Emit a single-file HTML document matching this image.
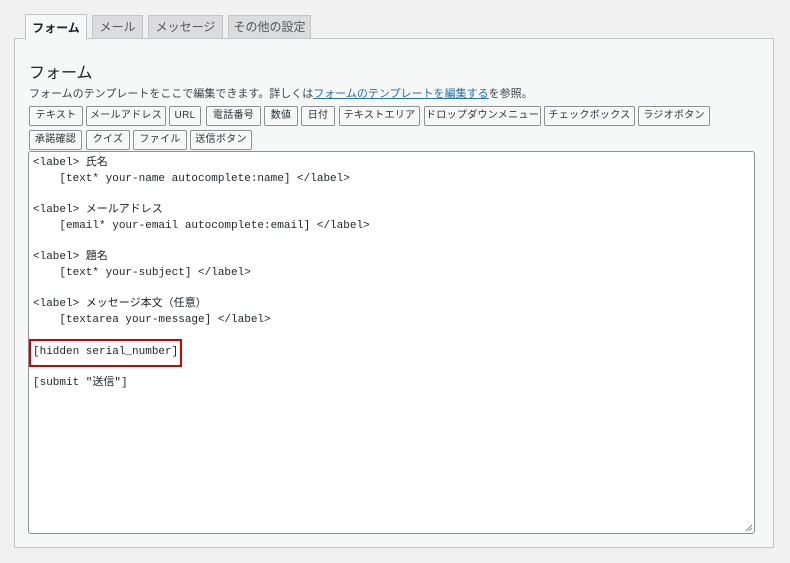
<!DOCTYPE html><html><head><meta charset="utf-8"><style>
body{margin:0;width:790px;height:563px;background:#f1f1f1;font-family:"Liberation Sans","Noto Sans CJK JP",sans-serif;color:#1d2327;position:relative;overflow:hidden}
.a{position:absolute}
.tab{position:absolute;top:15px;height:23px;border:1px solid #c3c4c7;border-bottom:none;background:#dcdcde;font-size:12px;line-height:23px;text-align:center;color:#50575e;box-sizing:border-box;white-space:nowrap}
.panel{left:14px;top:38px;width:760px;height:510px;border:1px solid #c3c4c7;background:#f6f7f7;box-sizing:border-box}
.b{position:absolute;height:20px;border:1px solid #8c8f94;border-radius:2px;background:#f6f7f7;font-size:10px;line-height:18px;text-align:center;box-sizing:border-box;color:#2c3338;box-shadow:inset 0 0 0 1px #fff;white-space:nowrap;overflow:hidden;letter-spacing:0.3px}
.ta{left:28px;top:151px;width:727px;height:383px;border:1px solid #8c8f94;border-radius:3px;background:#fff;box-sizing:border-box}
.l{position:absolute;left:33px;font-family:"Liberation Mono","Noto Sans CJK JP",monospace;font-size:11px;white-space:pre;line-height:14px}
</style></head><body>
<div class="a panel"></div>
<div class="tab" style="left:25px;width:62px;top:14px;height:26px;background:#f6f7f7;color:#1d2327;font-weight:bold;line-height:26px">フォーム</div>
<div class="tab" style="left:92px;width:51px">メール</div>
<div class="tab" style="left:148px;width:75px">メッセージ</div>
<div class="tab" style="left:228px;width:83px">その他の設定</div>
<div class="a" style="left:29px;top:59px;font-size:16px">フォーム</div>
<div class="a" style="left:29px;top:85px;font-size:11px;color:#3c434a">フォームのテンプレートをここで編集できます。詳しくは<span style="color:#2271b1;text-decoration:underline">フォームのテンプレートを編集する</span>を参照。</div>
<div class="b" style="left:29px;top:106px;width:54px">テキスト</div>
<div class="b" style="left:86px;top:106px;width:80px">メールアドレス</div>
<div class="b" style="left:169px;top:106px;width:32px">URL</div>
<div class="b" style="left:206px;top:106px;width:55px">電話番号</div>
<div class="b" style="left:264px;top:106px;width:34px">数値</div>
<div class="b" style="left:301px;top:106px;width:34px">日付</div>
<div class="b" style="left:339px;top:106px;width:81px">テキストエリア</div>
<div class="b" style="left:424px;top:106px;width:117px">ドロップダウンメニュー</div>
<div class="b" style="left:544px;top:106px;width:91px">チェックボックス</div>
<div class="b" style="left:638px;top:106px;width:72px">ラジオボタン</div>
<div class="b" style="left:29px;top:130px;width:53px">承諾確認</div>
<div class="b" style="left:86px;top:130px;width:44px">クイズ</div>
<div class="b" style="left:133px;top:130px;width:54px">ファイル</div>
<div class="b" style="left:190px;top:130px;width:62px">送信ボタン</div>
<div class="a ta"></div>
<div class="l" style="top:156px">&lt;label&gt; 氏名</div>
<div class="l" style="top:172px">    [text* your-name autocomplete:name] &lt;/label&gt;</div>
<div class="l" style="top:203px">&lt;label&gt; メールアドレス</div>
<div class="l" style="top:219px">    [email* your-email autocomplete:email] &lt;/label&gt;</div>
<div class="l" style="top:250px">&lt;label&gt; 題名</div>
<div class="l" style="top:266px">    [text* your-subject] &lt;/label&gt;</div>
<div class="l" style="top:297px">&lt;label&gt; メッセージ本文（任意）</div>
<div class="l" style="top:313px">    [textarea your-message] &lt;/label&gt;</div>
<div class="l" style="top:345px">[hidden serial_number]</div>
<div class="l" style="top:376px">[submit "送信"]</div>
<div class="a" style="left:29px;top:339px;width:153px;height:28px;border:2px solid #d40000;box-sizing:border-box"></div>
<svg class="a" style="left:745px;top:524px" width="8" height="8"><path d="M1 7L7 1M4 7L7 4" stroke="#888" stroke-width="1"/></svg>
</body></html>
